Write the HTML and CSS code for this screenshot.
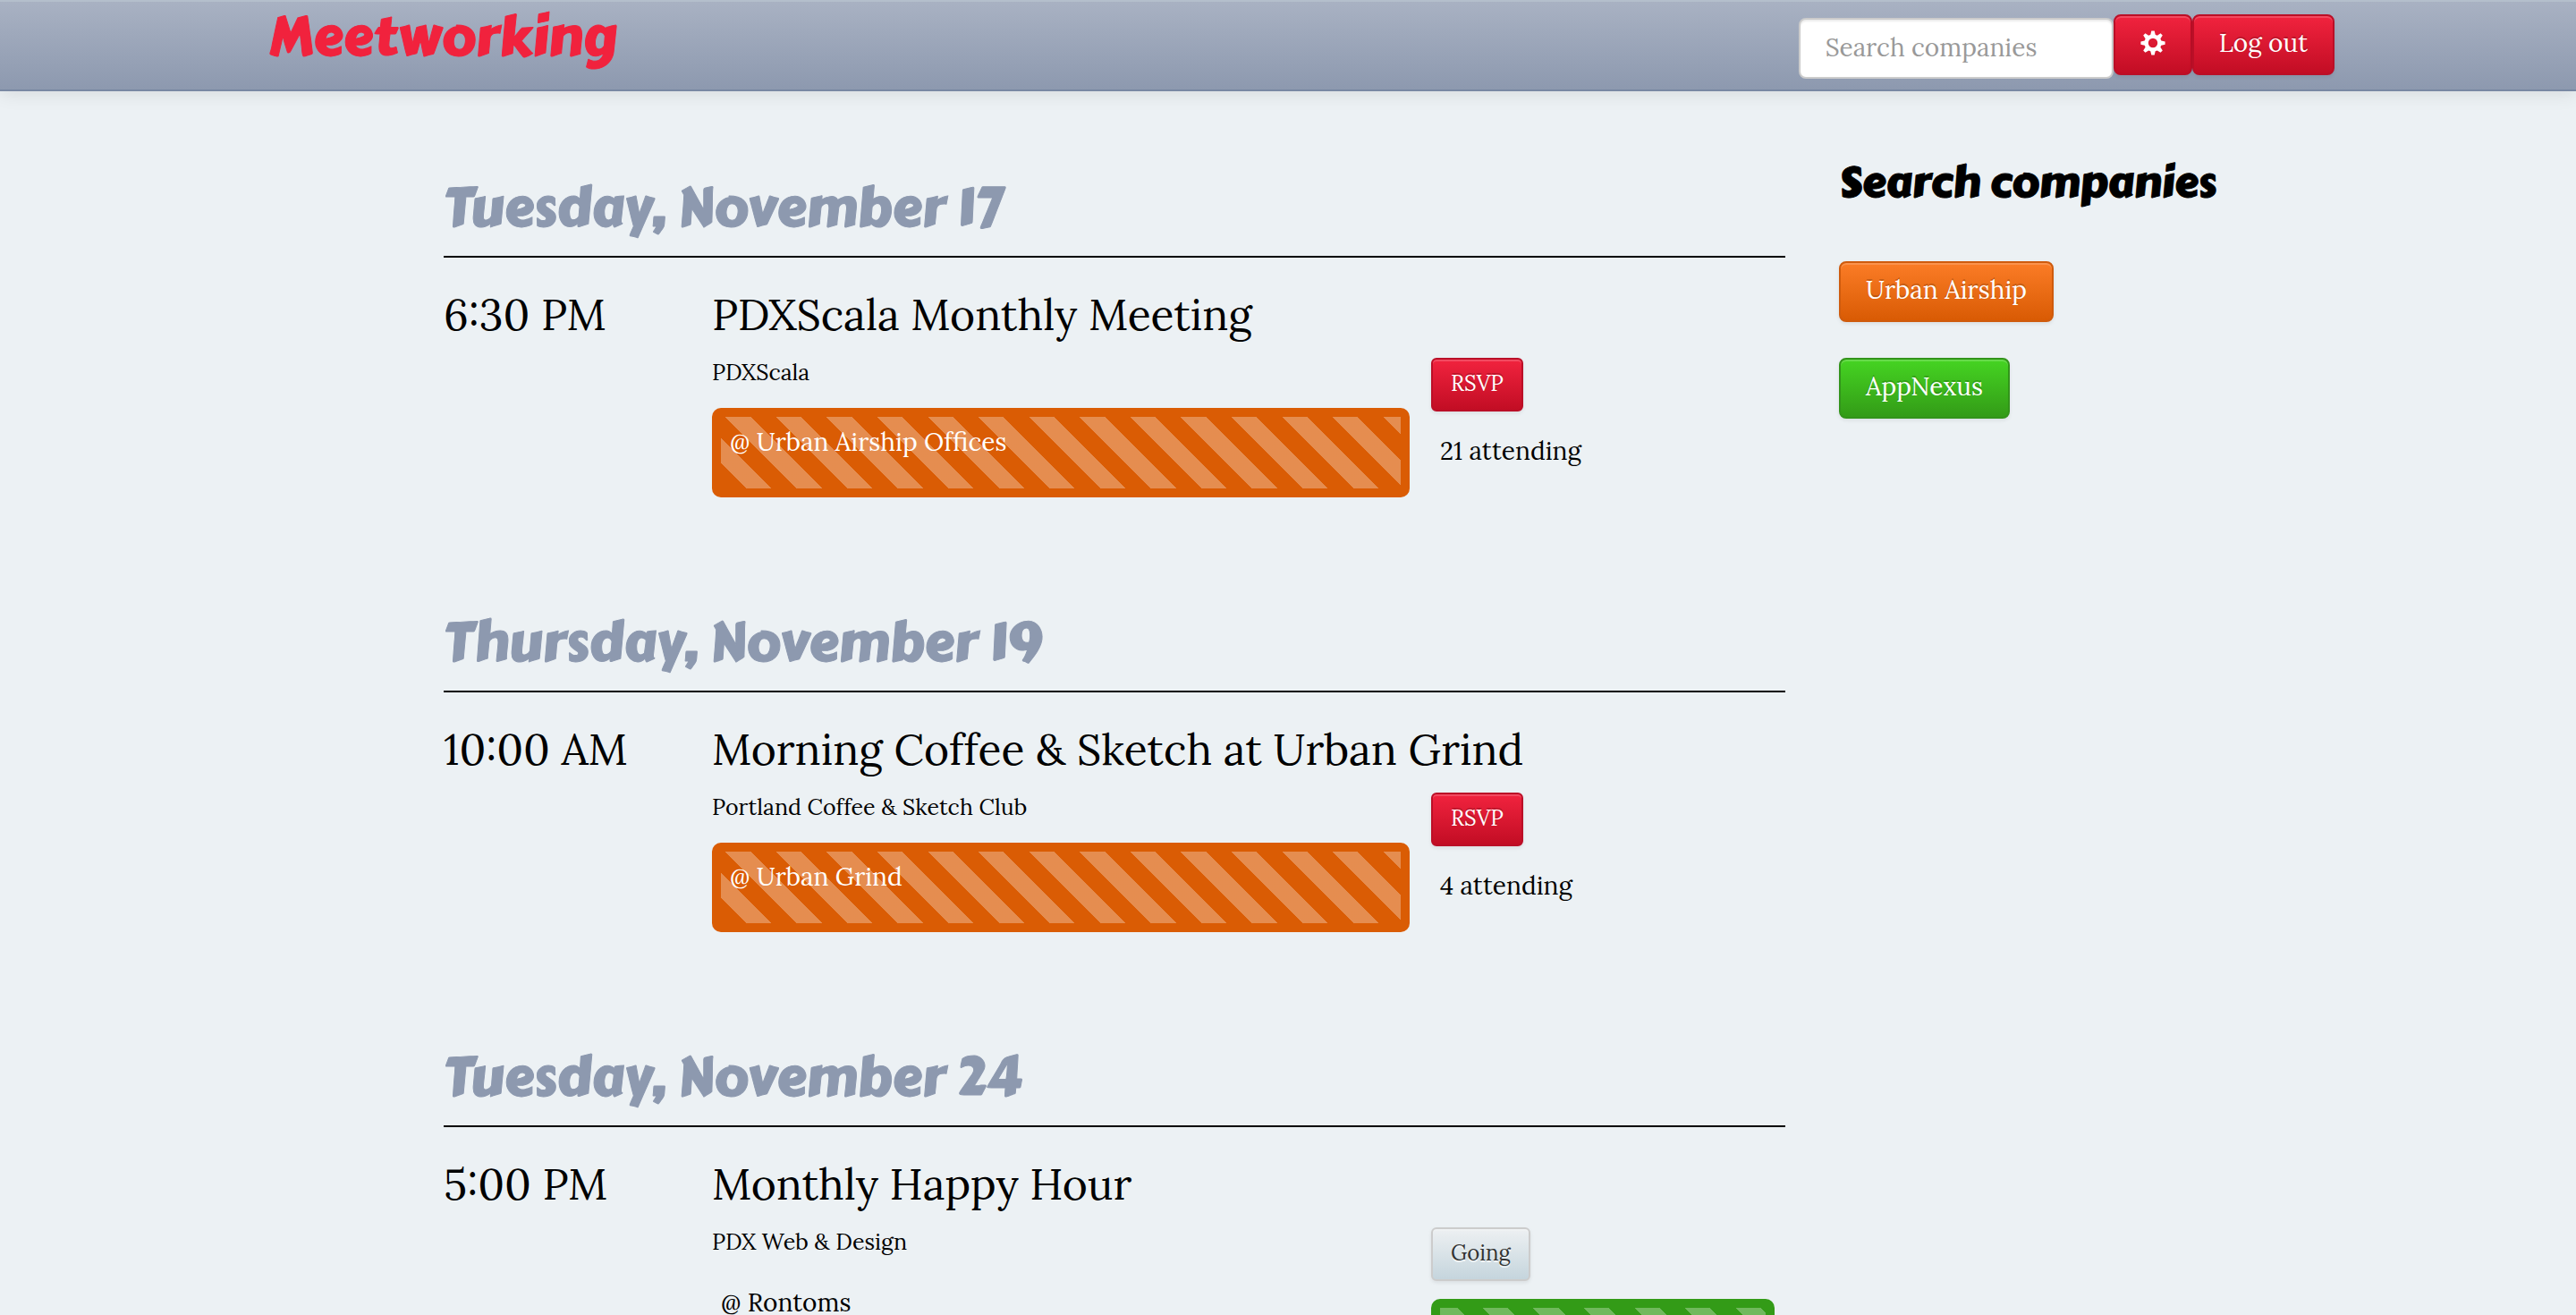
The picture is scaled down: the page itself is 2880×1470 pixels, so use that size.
FILE: index.html
```html
<!DOCTYPE html>
<html lang="en">
<head>
<meta charset="utf-8">
<title>Meetworking</title>
<link rel="stylesheet" href="styles.css">
</head>
<body>
<header class="navbar">
  <div class="container navbar-inner">
    <a class="brand" href="#">Meetworking</a>
    <form class="navbar-form">
      <input class="search" type="text" placeholder="Search companies" aria-label="Search companies">
      <button class="btn btn-primary btn-icon" type="button" aria-label="Settings">
        <svg class="gear" viewBox="0 0 28 28" aria-hidden="true">
          <path fill-rule="evenodd" d="M12.300 0.500h3.400l1 4.300 2.100.9 3.700-2.400 2.300 2.300-2.400 3.700.9 2.100 4.300 1v3.300l-4.300 1-.9 2.100 2.400 3.700-2.300 2.300-3.700-2.400-2.100.9-1 4.300h-3.400l-1-4.300-2.100-.9-3.700 2.400-2.300-2.300 2.400-3.700-.9-2.100-4.300-1v-3.300l4.300-1 .9-2.100-2.400-3.700 2.300-2.300 3.700 2.400 2.100-.9zM14 8.800a5.200 5.200 0 1 0 0 10.400a5.200 5.200 0 1 0 0-10.400z"/>
        </svg>
      </button>
      <button class="btn btn-primary" type="button">Log out</button>
    </form>
  </div>
</header>

<div class="container page">
  <main class="agenda">
    <section class="day">
      <h2 class="date">Tuesday, November 17</h2>
      <article class="event">
        <time class="time">6:30 PM</time>
        <div class="details">
          <h3 class="title">PDXScala Monthly Meeting</h3>
          <div class="columns">
            <div class="info">
              <p class="group">PDXScala</p>
              <div class="banner banner-orange"><p class="stripes">@ Urban Airship Offices</p></div>
            </div>
            <div class="reply">
              <button class="btn btn-small btn-primary" type="button">RSVP</button>
              <p class="attending">21 attending</p>
            </div>
          </div>
        </div>
      </article>
    </section>

    <section class="day">
      <h2 class="date">Thursday, November 19</h2>
      <article class="event">
        <time class="time">10:00 AM</time>
        <div class="details">
          <h3 class="title">Morning Coffee &amp; Sketch at Urban Grind</h3>
          <div class="columns">
            <div class="info">
              <p class="group">Portland Coffee &amp; Sketch Club</p>
              <div class="banner banner-orange"><p class="stripes">@ Urban Grind</p></div>
            </div>
            <div class="reply">
              <button class="btn btn-small btn-primary" type="button">RSVP</button>
              <p class="attending">4 attending</p>
            </div>
          </div>
        </div>
      </article>
    </section>

    <section class="day">
      <h2 class="date">Tuesday, November 24</h2>
      <article class="event">
        <time class="time">5:00 PM</time>
        <div class="details">
          <h3 class="title">Monthly Happy Hour</h3>
          <div class="columns">
            <div class="info">
              <p class="group">PDX Web &amp; Design</p>
              <div class="banner"><p>@ Rontoms</p></div>
            </div>
            <div class="reply">
              <button class="btn btn-small btn-default" type="button">Going</button>
              <div class="banner banner-green"><p class="stripes stripes-tall"></p></div>
            </div>
          </div>
        </div>
      </article>
    </section>
  </main>

  <aside class="sidebar">
    <h2 class="sidebar-title">Search companies</h2>
    <button class="btn btn-warning" type="button">Urban Airship</button>
    <button class="btn btn-success" type="button">AppNexus</button>
  </aside>
</div>
</body>
</html>
```
FILE: styles.css
```css
* {
  box-sizing: border-box;
}

body {
  margin: 0;
  height: 100vh;
  overflow: hidden;
  background: #ecf1f4;
  color: #000;
  font-family: Lora, "DejaVu Serif Condensed", "DejaVu Serif", serif;
  font-size: 28px;
  line-height: 40px;
}

h2,
h3,
p {
  margin: 0;
}

.container {
  max-width: 2340px;
  margin: 0 auto;
}

/* Navbar */

.navbar {
  background: linear-gradient(#a9b2c3, #8d99af);
  border-bottom: 2px solid #7988a3;
  box-shadow: inset 0 2px 0 #b4bfcc, 0 2px 20px rgba(0, 0, 0, 0.1);
}

.navbar-inner {
  display: flex;
  justify-content: space-between;
  align-items: flex-start;
  height: 100px;
  padding-left: 30px;
}

.brand,
.date,
.sidebar-title {
  font-family: "Carter One", "Noto Sans", sans-serif;
  font-weight: normal;
  -webkit-text-stroke: 1px currentColor;
}

.brand {
  color: #f1223d;
  font-size: 60px;
  line-height: 82px;
  text-decoration: none;
}

.navbar-form {
  display: flex;
  align-items: flex-start;
  padding-top: 16px;
}

.search {
  width: 352px;
  height: 68px;
  margin-top: 4px;
  padding: 0 28px 2px;
  border: 2px solid #ccc;
  border-radius: 8px;
  background: #fff;
  box-shadow: inset 0 2px 2px rgba(0, 0, 0, 0.08);
  color: #555;
  font: inherit;
}

.search::placeholder {
  color: #999;
  opacity: 1;
}

/* Buttons */

.btn {
  display: block;
  height: 68px;
  padding: 0 28px 4px;
  border: 2px solid;
  border-radius: 8px;
  box-shadow: inset 0 2px 0 rgba(255, 255, 255, 0.18), 0 2px 4px rgba(0, 0, 0, 0.08);
  color: #fff;
  font: inherit;
  text-shadow: 0 -2px 0 rgba(0, 0, 0, 0.2);
}

.gear {
  display: block;
  width: 28px;
  height: 28px;
  fill: #fff;
}

.btn-small {
  height: 60px;
  padding: 0 20px 2px;
  border-radius: 6px;
  font-size: 24px;
}

.btn-primary {
  border-color: #bb0f27;
  background: #c20d24 linear-gradient(#f1233e, #c20d24);
}

.btn-warning {
  border-color: #cf5b0d;
  background: #d95b04 linear-gradient(#fb7c26, #d95b04);
}

.btn-success {
  border-color: #32941a;
  background: #339b17 linear-gradient(#45d422, #339b17);
}

.btn-default {
  border-color: #ccc;
  background: #c5d5dd linear-gradient(#edf0f2, #c5d5dd);
  color: #333;
  text-shadow: 0 2px 0 rgba(255, 255, 255, 0.75);
}

/* Page */

.page {
  display: grid;
  grid-template-columns: minmax(0, 1500px) minmax(0, 1fr);
  column-gap: 60px;
  padding: 62px 0 0 226px;
}

.day {
  padding: 28px 0 94px;
}

.date {
  padding-bottom: 14px;
  border-bottom: 2px solid #000;
  color: #8d99af;
  font-size: 60px;
  line-height: 80px;
}

.event {
  display: grid;
  grid-template-columns: 1fr 4fr;
  padding-top: 24px;
}

.time,
.title {
  font-size: 48px;
  font-weight: normal;
  line-height: 80px;
}

.columns {
  display: grid;
  grid-template-columns: 65% 32%;
  column-gap: 24px;
  padding-top: 6px;
}

.group {
  font-size: 25px;
  line-height: 36px;
}

.banner {
  padding: 8px 10px;
  border-radius: 10px;
}

.info .banner {
  margin-top: 22px;
}

.banner-orange,
.banner-green {
  padding: 10px;
}

.banner-orange {
  background: #da5c04;
  color: #fff;
}

.banner-green {
  margin-top: 20px;
  background: #339b17;
}

.stripes {
  min-height: 80px;
  padding: 8px 10px;
  background: repeating-linear-gradient(45deg, transparent 0 20px, rgba(255, 255, 255, 0.3) 20px 40px);
}

.stripes-tall {
  min-height: 94px;
}

.reply {
  padding-top: 2px;
}

.attending {
  padding: 24px 10px 0;
}

/* Sidebar */

.sidebar {
  display: flex;
  flex-direction: column;
  align-items: flex-start;
}

.sidebar-title {
  margin-bottom: 48px;
  font-size: 48px;
  line-height: 80px;
}

.sidebar .btn {
  margin-bottom: 40px;
}
```
